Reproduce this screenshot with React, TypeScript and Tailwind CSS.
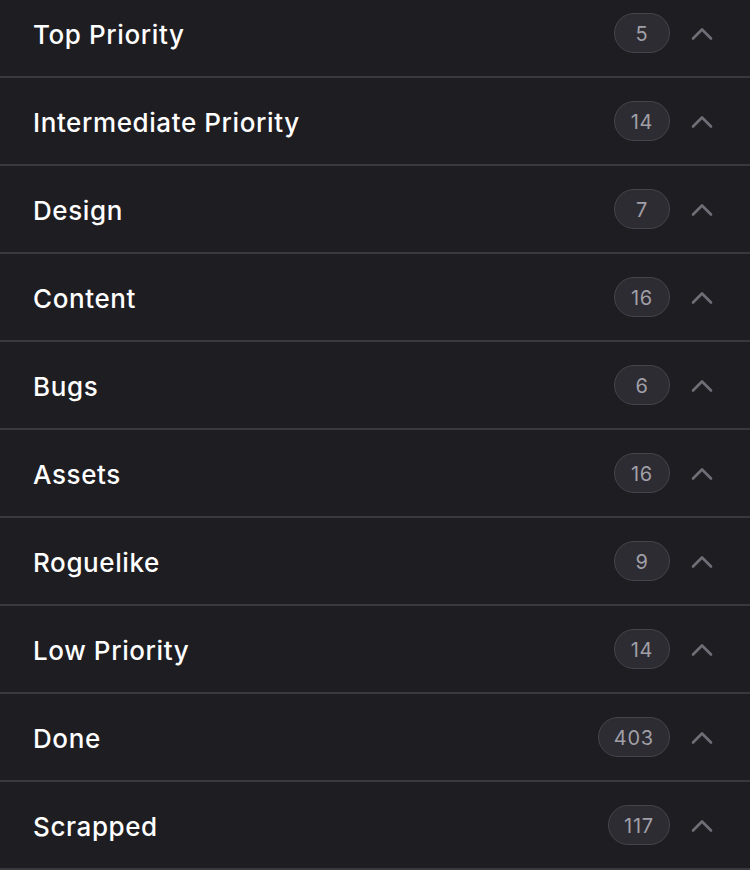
import React from "react";

const rows: [string, number][] = [
  ["Top Priority", 5],
  ["Intermediate Priority", 14],
  ["Design", 7],
  ["Content", 16],
  ["Bugs", 6],
  ["Assets", 16],
  ["Roguelike", 9],
  ["Low Priority", 14],
  ["Done", 403],
  ["Scrapped", 117],
];

function Chevron() {
  return (
    <svg width="22" height="13" viewBox="0 0 22 13" fill="none">
      <path d="M2 11.5 L11 2.5 L20 11.5" stroke="#6f6e76" strokeWidth="2.6" strokeLinecap="round" strokeLinejoin="round" />
    </svg>
  );
}

export default function App() {
  return (
    <div className="w-[750px] h-[870px] overflow-hidden bg-[#1e1d22]" style={{ fontFamily: "Inter, 'Noto Sans', sans-serif" }}>
      <div className="-mt-[10px]">
        {rows.map(([name, n]) => (
          <div key={name} className="h-[88px] flex items-center border-b-2 border-[#3a393f] pl-[33px] pr-[37px]">
            <div className="flex-1 text-white text-[26px] font-medium tracking-[0.6px] pt-[3px]">{name}</div>
            <div className="h-[40px] min-w-[56px] px-[15px] pt-[2px] rounded-full bg-[#2d2c32] border border-[#45444b] flex items-center justify-center text-[#a09fa7] text-[20px] tracking-[0.8px]">
              {n}
            </div>
            <div className="ml-[21px] flex items-center">
              <Chevron />
            </div>
          </div>
        ))}
      </div>
    </div>
  );
}
